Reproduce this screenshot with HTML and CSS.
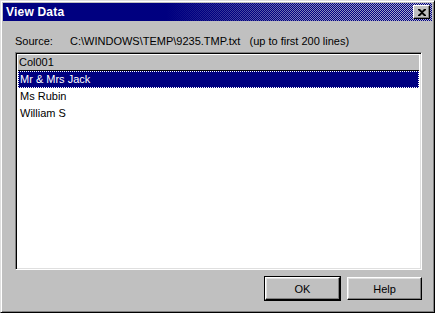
FILE: index.html
```html
<!DOCTYPE html>
<html lang="en">
<head>
<meta charset="UTF-8" />
<meta name="viewport" content="width=device-width,initial-scale=1.0" />
<title>View Data</title>
<link rel="stylesheet" href="styles.css">
</head>
<body>
  <div class="dialog">
    <div class="titlebar">
      <span class="title">View Data</span>
      <button class="close" aria-label="Close">
        <svg width="8" height="7" viewBox="0 0 8 7"><path d="M0 0h2l2 2 2-2h2v1l-3 2.5 3 2.5v1h-2l-2-2-2 2h-2v-1l3-2.5-3-2.5z" fill="#000"/></svg>
      </button>
    </div>
    <div class="content">
      <div class="source">
        <span class="source-label">Source:</span>
        <span class="source-path">C:\WINDOWS\TEMP\9235.TMP.txt&nbsp;&nbsp;&nbsp;(up to first 200 lines)</span>
      </div>
      <div class="list">
        <div class="list-head">Col001</div>
        <div class="list-row selected">Mr &amp; Mrs Jack</div>
        <div class="list-row">Ms Rubin</div>
        <div class="list-row">William S</div>
      </div>
      <div class="actions">
        <button class="btn default">OK</button>
        <button class="btn">Help</button>
      </div>
    </div>
  </div>
</body>
</html>
```
FILE: styles.css
```css
body { margin:0; font-family:"Liberation Sans", Arial, sans-serif; font-size:11px; background:#c0c0c0; }
.dialog { width:435px; height:313px; box-sizing:border-box; background:#c0c0c0; border:1px solid; border-color:#dfdfdf #000 #000 #dfdfdf; box-shadow: inset 1px 1px 0 #fff, inset -1px -1px 0 #808080; padding:2px; display:flex; flex-direction:column; }
.titlebar { height:18px; display:flex; align-items:center; justify-content:space-between; padding:0 2px 0 3px;
  background:
    linear-gradient(to right, #000080 0, #000080 38%, rgba(0,0,128,0.7) 52%, rgba(0,0,128,0.35) 70%, rgba(0,0,128,0.1) 100%),
    repeating-conic-gradient(#000080 0 25%, #c8c8d8 0 50%) 0 0 / 2px 2px; }
.title { color:#fff; font-weight:700; font-size:12px; letter-spacing:0.2px; }
.close { width:17px; height:14px; padding:0; margin:0; display:grid; place-items:center; background:#c0c0c0; border:1px solid; border-color:#fff #000 #000 #fff; box-shadow: inset -1px -1px 0 #808080; }
.content { flex:1; display:flex; flex-direction:column; padding:0 10px 0 12px; }
.source { height:31px; display:flex; align-items:flex-end; padding-bottom:5px; box-sizing:border-box; color:#000; }
.source-label { width:55px; }
.list { height:218px; box-sizing:border-box; background:#fff; border:1px solid; border-color:#808080 #fff #fff #808080; box-shadow: inset 1px 1px 0 #000, inset -1px -1px 0 #dfdfdf; padding:2px; }
.list-head { height:15px; line-height:15px; padding-left:1px; background:#c0c0c0; border-bottom:1px solid #000; }
.list-row { height:17px; line-height:17px; padding-left:2px; }
.list-row.selected { background:#000080; color:#fff; outline:1px dotted #fff; outline-offset:-1px; }
.actions { display:flex; justify-content:flex-end; gap:7px; margin-top:7px; }
.btn { width:75px; height:23px; font-family:inherit; font-size:11px; color:#000; background:#c0c0c0; border:1px solid; border-color:#fff #000 #000 #fff; box-shadow: inset -1px -1px 0 #808080, inset 1px 1px 0 #dfdfdf; padding:0; }
.btn.default { outline:1px solid #000; outline-offset:0; }
```
